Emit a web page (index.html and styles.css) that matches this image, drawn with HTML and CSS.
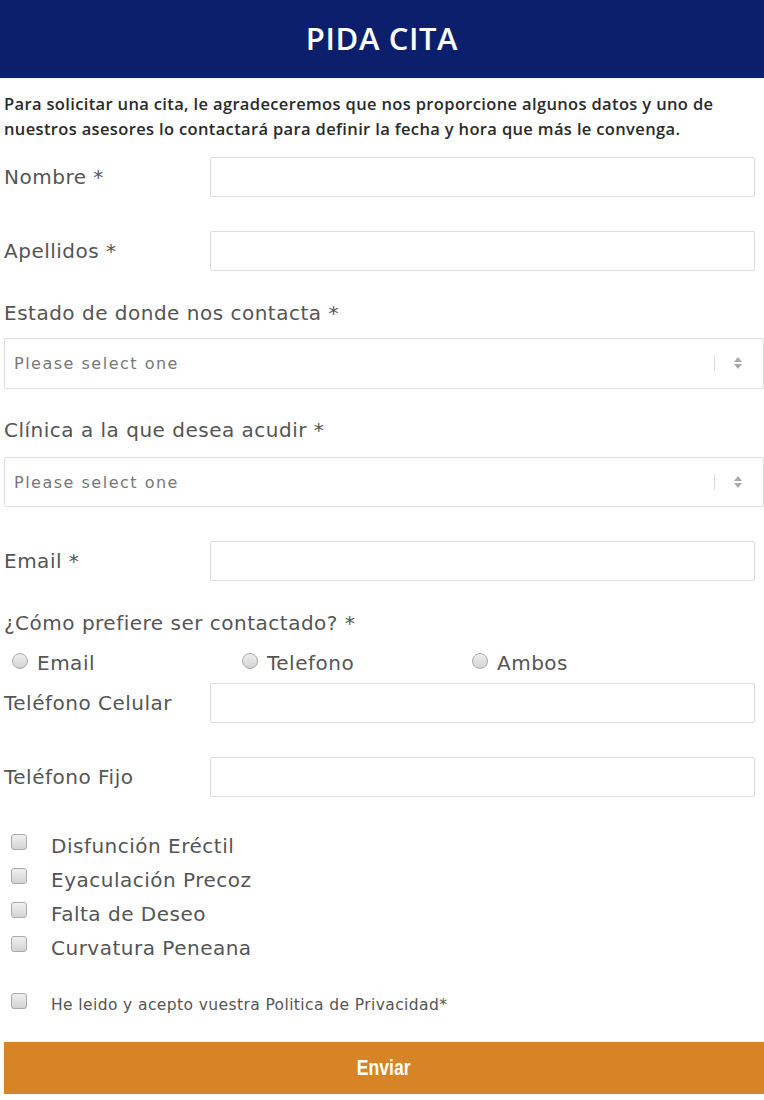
FILE: index.html
```html
<!DOCTYPE html>
<html>
<head>
    <title>Pida Cita</title>
    <link rel="stylesheet" href="styles.css">
</head>
<body>
    <div class="header">PIDA CITA</div>

    <p class="intro">Para solicitar una cita, le agradeceremos que nos proporcione algunos datos y uno de nuestros asesores lo contactará para definir la fecha y hora que más le convenga.</p>

    <form id="citaForm">
        <div class="row first">
            <label for="nombre">Nombre *</label>
            <input type="text" id="nombre">
        </div>

        <div class="row">
            <label for="apellidos">Apellidos *</label>
            <input type="text" id="apellidos">
        </div>

        <label class="block-label" for="estado">Estado de donde nos contacta *</label>
        <div class="select-box">
            <select id="estado">
                <option>Please select one</option>
            </select>
            <span class="select-arrows"></span>
        </div>

        <label class="block-label" for="clinica">Clínica a la que desea acudir *</label>
        <div class="select-box second">
            <select id="clinica">
                <option>Please select one</option>
            </select>
            <span class="select-arrows"></span>
        </div>

        <div class="row">
            <label for="email">Email *</label>
            <input type="email" id="email">
        </div>

        <label class="block-label contact">¿Cómo prefiere ser contactado? *</label>
        <div class="radios">
            <label class="radio"><input type="radio" name="contacto"> Email</label>
            <label class="radio"><input type="radio" name="contacto"> Telefono</label>
            <label class="radio"><input type="radio" name="contacto"> Ambos</label>
        </div>

        <div class="row phone">
            <label for="celular">Teléfono Celular</label>
            <input type="text" id="celular">
        </div>

        <div class="row">
            <label for="fijo">Teléfono Fijo</label>
            <input type="text" id="fijo">
        </div>

        <div class="checks">
            <label class="check"><input type="checkbox"> Disfunción Eréctil</label>
            <label class="check"><input type="checkbox"> Eyaculación Precoz</label>
            <label class="check"><input type="checkbox"> Falta de Deseo</label>
            <label class="check"><input type="checkbox"> Curvatura Peneana</label>
        </div>

        <label class="check privacy"><input type="checkbox"> He leido y acepto vuestra Politica de Privacidad*</label>

        <button type="button"><span>Enviar</span></button>
    </form>
</body>
</html>
```

FILE: styles.css
```css
body {
    margin: 0;
    font-family: "DejaVu Sans", "Noto Sans", sans-serif;
    background: #fff;
    color: #555;
}
.header {
    background: #0b1f6d;
    color: #fff;
    height: 78px;
    line-height: 76px;
    text-align: center;
    font-family: "Open Sans", "Noto Sans", sans-serif;
    font-size: 31px;
    font-weight: 600;
    letter-spacing: 0.6px;
}
.intro {
    margin: 13px 0 0;
    padding: 0 4px;
    max-width: 730px;
    font-family: "Open Sans", "Noto Sans", sans-serif;
    font-size: 16.5px;
    line-height: 25px;
    font-weight: 600;
    color: #2a2a2a;
    letter-spacing: 0.35px;
}
form {
    padding: 0 0 0 4px;
}
.row {
    display: flex;
    align-items: center;
    margin-top: 34px;
    margin-right: 9px;
}
.row.first {
    margin-top: 16px;
}
.row label {
    width: 206px;
    font-size: 20px;
    letter-spacing: 0.5px;
}
.row input {
    flex: 1;
    height: 40px;
    box-sizing: border-box;
    border: 1px solid #ddd;
    border-radius: 2px;
    padding: 0 8px;
}
.block-label {
    display: block;
    font-size: 20px;
    letter-spacing: 0.5px;
    line-height: 24px;
    margin-top: 30px;
}
.select-box {
    position: relative;
    margin-top: 13px;
    height: 51px;
    box-sizing: border-box;
    border: 1px solid #ddd;
    border-radius: 2px;
}
.select-box.second {
    margin-top: 15px;
    height: 50px;
}
.select-box + .block-label {
    margin-top: 29px;
}
.select-box select {
    appearance: none;
    -webkit-appearance: none;
    width: 100%;
    height: 100%;
    border: none;
    background: transparent;
    padding: 0 9px;
    font-family: "DejaVu Sans", sans-serif;
    font-size: 16px;
    letter-spacing: 1.5px;
    color: #777;
}
.select-arrows {
    position: absolute;
    right: 48px;
    top: 16px;
    height: 16px;
    border-left: 1px solid #ddd;
}
.select-arrows::before,
.select-arrows::after {
    content: "";
    position: absolute;
    left: 19px;
    border-left: 4px solid transparent;
    border-right: 4px solid transparent;
}
.select-arrows::before {
    top: 2px;
    border-bottom: 5px solid #aaa;
}
.select-arrows::after {
    top: 9px;
    border-top: 5px solid #aaa;
}
.block-label.contact {
    margin-top: 30px;
}
.radios {
    display: flex;
    margin-top: 18px;
    padding-left: 8px;
    height: 20px;
    align-items: center;
}
.radio {
    width: 230px;
    font-size: 20px;
    letter-spacing: 0.5px;
    display: flex;
    align-items: center;
}
.radio input {
    appearance: none;
    -webkit-appearance: none;
    width: 16px;
    height: 16px;
    margin: 0 9px 0 0;
    border: 1px solid #aaa;
    border-radius: 50%;
    background: linear-gradient(#eee, #d4d4d4);
    position: relative;
    top: -2px;
}
.row.phone {
    margin-top: 10px;
}
.checks {
    margin-top: 32px;
}
.check {
    display: flex;
    align-items: center;
    height: 34px;
    font-size: 20px;
    letter-spacing: 0.5px;
    padding-left: 7px;
}
.check input {
    appearance: none;
    -webkit-appearance: none;
    width: 16px;
    height: 16px;
    margin: 0 24px 0 0;
    border: 1px solid #aaa;
    border-radius: 3px;
    background: linear-gradient(#f0f0f0, #d4d4d4);
    position: relative;
    top: -4px;
}
.check.privacy {
    margin-top: 23px;
    font-size: 15.5px;
    letter-spacing: 0.4px;
}
button {
    display: block;
    width: 100%;
    margin-top: 20px;
    height: 52px;
    border: none;
    background: #d68426;
    color: #fff;
    font-family: "Liberation Sans", Arial, sans-serif;
    font-weight: bold;
    font-size: 22px;
    cursor: pointer;
}
button span {
    display: inline-block;
    transform: scaleX(0.8);
}
```
